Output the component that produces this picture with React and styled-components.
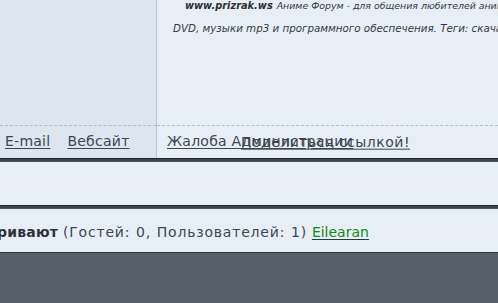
import React from 'react';
import styled, { createGlobalStyle } from 'styled-components';

const GlobalStyle = createGlobalStyle`
  html, body {
    margin: 0;
    padding: 0;
    background: #535f69;
    overflow: hidden;
    font-family: "DejaVu Sans", Verdana, sans-serif;
  }
`;

const Page = styled.div`
  width: 498px;
  height: 303px;
  overflow: hidden;
  background: #535f69;
`;

const Profile = styled.div`
  display: grid;
  grid-template-columns: 157px 1fr;
  height: 158px;
`;

const Column = styled.div`
  display: flex;
  flex-direction: column;
  background: ${p => (p.$side ? '#dde6ef' : '#e8eef6')};
  border-right: ${p => (p.$side ? '1px solid #b9c5d1' : 'none')};
  overflow: hidden;
`;

const Signature = styled.div`
  height: 125px;
  border-bottom: 1px dashed #b4bec9;
  overflow: hidden;
  color: #333a44;
  font-style: italic;
`;

const SigLine = styled.div`
  white-space: nowrap;
  line-height: 23px;
  font-size: ${p => p.$size}px;
  padding-left: ${p => p.$indent}px;
  margin-top: ${p => (p.$first ? '-6px' : '0')};
`;

const Site = styled.b`
  font-size: 9.8px;
  color: #2a2f36;
  margin-right: 1px;
`;

const Links = styled.div`
  position: relative;
  flex: 1;
  display: flex;
  align-items: center;
  gap: 17px;
  padding: 0 0 2px ${p => p.$pad}px;
  white-space: nowrap;
`;

const Link = styled.a`
  color: #3c4651;
  font-size: 14px;
  text-decoration: underline;
  text-underline-offset: 2px;
  letter-spacing: 0.25px;
`;

const ShareLink = styled(Link)`
  position: absolute;
  left: 84px;
  top: 50%;
  transform: translateY(-52%);
  letter-spacing: 0.5px;
`;

const Divider = styled.div`
  height: 4px;
  background: linear-gradient(#22262a 0 1px, #3b454d 1px 3px, #4a565f 3px);
`;

const Bar = styled.div`
  height: ${p => p.$h}px;
  background: #e8eef6;
  display: flex;
  align-items: center;
  white-space: nowrap;
  font-size: 14px;
  color: #3c4651;
`;

const Viewers = styled.div`
  margin-left: -3px;
  padding-top: 2px;
  word-spacing: 0.5px;
`;

const Bold = styled.b`
  color: #2c323a;
  letter-spacing: 0.2px;
`;

const Count = styled.span`
  letter-spacing: 0.8px;
`;

const UserLink = styled.a`
  color: #118a14;
  text-decoration: underline;
  text-decoration-color: #2f3740;
  text-underline-offset: 2px;
  letter-spacing: 0;
`;

const BottomEdge = styled.div`
  height: 1px;
  background: #2b3136;
`;

export default function App() {
  return (
    <Page>
      <GlobalStyle />
      <Profile>
        <Column $side>
          <Signature />
          <Links $pad={5}>
            <Link href="#">E-mail</Link>
            <Link href="#">Вебсайт</Link>
          </Links>
        </Column>
        <Column>
          <Signature>
            <SigLine $indent={28} $size={9.4} $first>
              <Site>www.prizrak.ws</Site> Аниме Форум - для общения любителей аниме, обмена
            </SigLine>
            <SigLine $indent={16} $size={10.3}>
              DVD, музыки mp3 и программного обеспечения. Теги: скачать аниме, смотреть онлайн
            </SigLine>
          </Signature>
          <Links $pad={10}>
            <Link href="#">Жалоба Администрации</Link>
            <ShareLink href="#">Поделиться ссылкой!</ShareLink>
          </Links>
        </Column>
      </Profile>
      <Divider />
      <Bar $h={43} />
      <Divider />
      <Bar $h={43}>
        <Viewers>
          <Bold>ривают</Bold> <Count>(Гостей: 0, Пользователей: 1)</Count> <UserLink href="#">Eilearan</UserLink>
        </Viewers>
      </Bar>
      <BottomEdge />
    </Page>
  );
}
